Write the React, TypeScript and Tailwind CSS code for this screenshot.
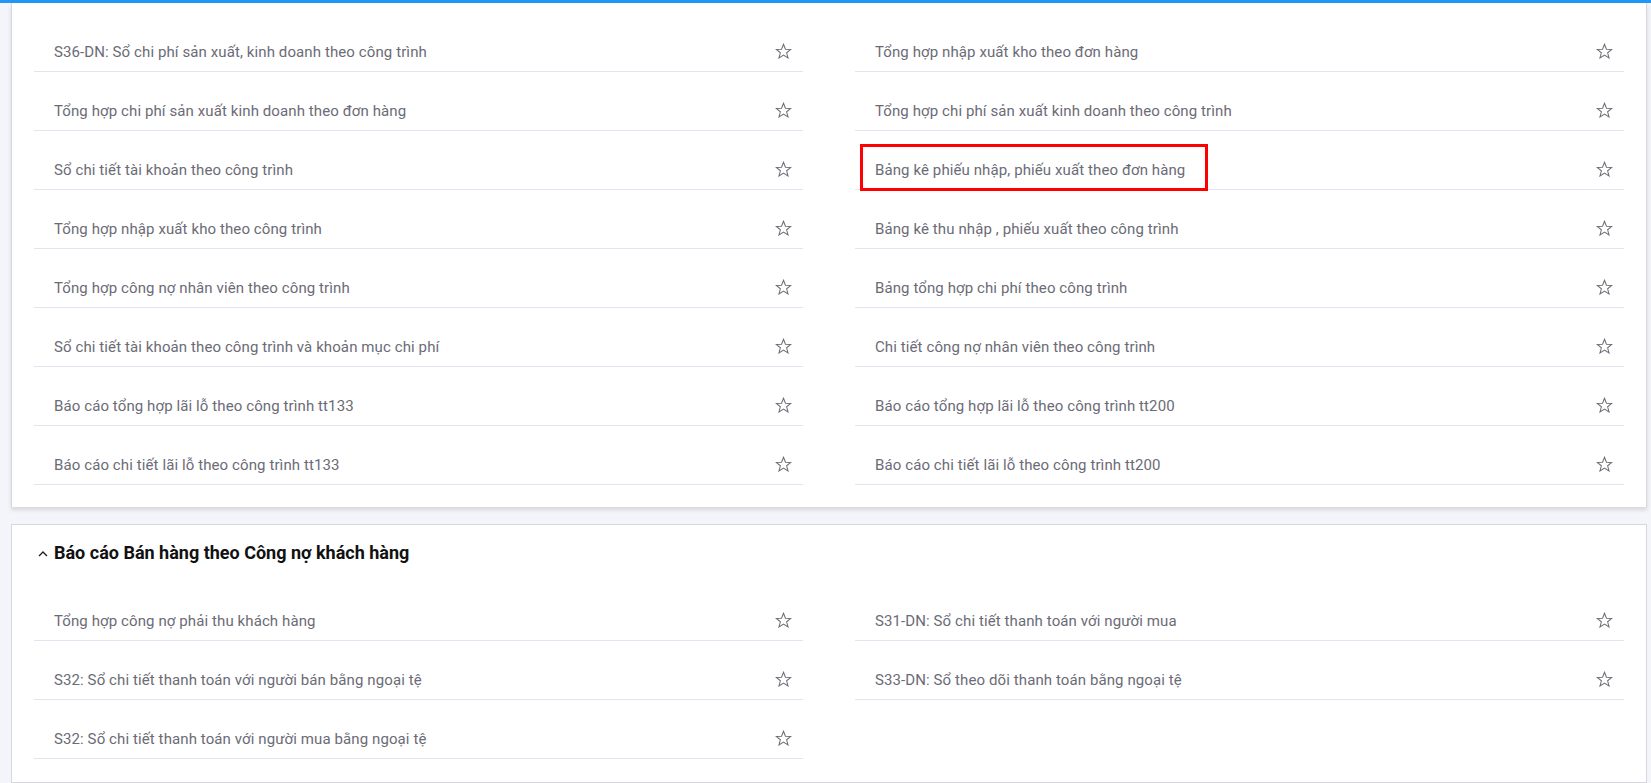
import React from 'react';

const congTrinhLeft = [
    'S36-DN: Sổ chi phí sản xuất, kinh doanh theo công trình',
    'Tổng hợp chi phí sản xuất kinh doanh theo đơn hàng',
    'Sổ chi tiết tài khoản theo công trình',
    'Tổng hợp nhập xuất kho theo công trình',
    'Tổng hợp công nợ nhân viên theo công trình',
    'Sổ chi tiết tài khoản theo công trình và khoản mục chi phí',
    'Báo cáo tổng hợp lãi lỗ theo công trình tt133',
    'Báo cáo chi tiết lãi lỗ theo công trình tt133',
];

const congTrinhRight = [
    'Tổng hợp nhập xuất kho theo đơn hàng',
    'Tổng hợp chi phí sản xuất kinh doanh theo công trình',
    'Bảng kê phiếu nhập, phiếu xuất theo đơn hàng',
    'Bảng kê thu nhập , phiếu xuất theo công trình',
    'Bảng tổng hợp chi phí theo công trình',
    'Chi tiết công nợ nhân viên theo công trình',
    'Báo cáo tổng hợp lãi lỗ theo công trình tt200',
    'Báo cáo chi tiết lãi lỗ theo công trình tt200',
];

const banHangLeft = [
    'Tổng hợp công nợ phải thu khách hàng',
    'S32: Sổ chi tiết thanh toán với người bán bằng ngoại tệ',
    'S32: Sổ chi tiết thanh toán với người mua bằng ngoại tệ',
];

const banHangRight = [
    'S31-DN: Sổ chi tiết thanh toán với người mua',
    'S33-DN: Sổ theo dõi thanh toán bằng ngoại tệ',
];

// interleave two columns so the grid fills row by row
function interleave(left: string[], right: string[]) {
    const out: { label: string; col: 'l' | 'r' }[] = [];
    const n = Math.max(left.length, right.length);
    for (let i = 0; i < n; i++) {
        if (left[i]) out.push({ label: left[i], col: 'l' });
        if (right[i]) out.push({ label: right[i], col: 'r' });
    }
    return out;
}

function StarIcon() {
    return (
        <svg width="17" height="16" viewBox="0 0 24 23" fill="none" stroke="#6f6f78" strokeWidth="1.5" strokeLinejoin="miter">
            <path d="M12 1.8 L14.8 8.9 L22.4 9.3 L16.5 14.1 L18.5 21.5 L12 17.3 L5.5 21.5 L7.5 14.1 L1.6 9.3 L9.2 8.9 Z" />
        </svg>
    );
}

function ReportRow({ label, marked }: { label: string; marked?: boolean }) {
    return (
        <div className="relative h-[59px] border-b border-[#e4e4f0] pt-[30px] pb-[10px]">
            <div className="flex h-[18px] items-center justify-between pl-[20px] pr-[11px]">
                <span className="text-[15px] leading-[18px] tracking-[0.1px] text-[#6b6b76]">{label}</span>
                <span className="mb-[3px] flex">
                    <StarIcon />
                </span>
            </div>
            {marked && (
                <div className="pointer-events-none absolute left-[5px] top-[13px] h-[47px] w-[348px] border-[3px] border-[#ff0000]" />
            )}
        </div>
    );
}

export default function App() {
    const first = interleave(congTrinhLeft, congTrinhRight);
    const second = interleave(banHangLeft, banHangRight);

    return (
        <div className="h-[783px] overflow-hidden bg-[#f4f5fa] font-['Roboto',sans-serif]">
            <div className="h-[3px] bg-[#2196f3]" />
            <div className="pl-[11px] pr-[4px]">
                {/* card: Báo cáo theo công trình (scrolled, header off screen) */}
                <div className="border-x border-[#d6d8de] bg-white px-[22px] pt-[10px] pb-[22px] shadow-[0_3px_4px_rgba(0,0,0,0.12)]">
                    <div className="grid grid-cols-2 gap-x-[52px]">
                        {first.map((item, i) => (
                            <ReportRow
                                key={i}
                                label={item.label}
                                marked={item.label === 'Bảng kê phiếu nhập, phiếu xuất theo đơn hàng'}
                            />
                        ))}
                    </div>
                </div>

                {/* card: Báo cáo Bán hàng theo Công nợ khách hàng */}
                <div className="mt-[17px] border border-[#d6d8de] bg-white px-[22px] pt-[18px] pb-[23px]">
                    <div className="flex h-[20px] items-center gap-[6px] pl-[4px]">
                        <svg width="10" height="7" viewBox="0 0 10 7" fill="none" stroke="#222" strokeWidth="1.4">
                            <path d="M1 6 L5 2 L9 6" />
                        </svg>
                        <h2 className="text-[18px] font-bold leading-[20px] text-[#111]">
                            Báo cáo Bán hàng theo Công nợ khách hàng
                        </h2>
                    </div>
                    <div className="mt-[19px] grid grid-cols-2 gap-x-[52px]">
                        {second.map((item, i) => (
                            <ReportRow key={i} label={item.label} />
                        ))}
                    </div>
                </div>
            </div>
        </div>
    );
}
